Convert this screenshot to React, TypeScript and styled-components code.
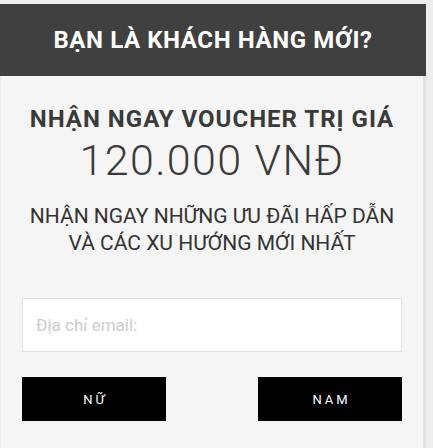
import React from "react";
import styled, { createGlobalStyle } from "styled-components";

const GlobalStyle = createGlobalStyle`
  html, body {
    margin: 0;
    padding: 0;
    background: #ededed;
    font-family: Roboto, "Liberation Sans", Arial, sans-serif;
  }
`;

const Panel = styled.div`
  margin-top: 4px;
  width: 426px;
  height: 444px;
  background: #f5f5f5;
  border-right: 3px solid #e2e2e2;
  border-left: 1px solid #ececec;
  box-sizing: border-box;
`;

const Header = styled.div`
  height: 72px;
  background: #404040;
  display: flex;
  align-items: center;
  justify-content: center;
  margin-right: -3px;
  margin-left: -1px;
`;

const HeaderTitle = styled.h1`
  margin: 0;
  color: #ffffff;
  font-size: 24px;
  font-weight: 700;
  letter-spacing: 0.6px;
`;

const Body = styled.div`
  display: flex;
  flex-direction: column;
  align-items: center;
  padding: 28px 21px 0;
`;

const Lead = styled.h2`
  margin: 0;
  color: #3a3a3a;
  font-size: 24px;
  font-weight: 700;
  letter-spacing: 1px;
  line-height: 30px;
`;

const Amount = styled.div`
  margin-top: 2px;
  color: #3a3a3a;
  font-size: 43px;
  font-weight: 300;
  letter-spacing: 1.4px;
  line-height: 48px;
`;

const Subline = styled.p`
  margin: 19px 0 0;
  color: #333333;
  font-size: 21px;
  font-weight: 400;
  line-height: 27px;
  text-align: center;
`;

const EmailInput = styled.input`
  margin-top: 41px;
  width: 100%;
  height: 54px;
  box-sizing: border-box;
  border: 1px solid #e3e3e3;
  background: #ffffff;
  padding: 0 13px;
  font-family: inherit;
  font-size: 17px;
  color: #333;
  outline: none;

  &::placeholder {
    color: #cccccc;
  }
`;

const ButtonRow = styled.div`
  margin-top: 25px;
  width: 100%;
  display: flex;
  justify-content: space-between;
`;

const GenderButton = styled.button`
  width: 144px;
  height: 44px;
  border: none;
  background: #000000;
  color: #ffffff;
  font-family: inherit;
  font-size: 13px;
  letter-spacing: 3px;
  padding: 0 0 0 3px;
  cursor: pointer;
`;

const App: React.FC = () => {
  return (
    <>
      <GlobalStyle />
      <Panel>
        <Header>
          <HeaderTitle>BẠN LÀ KHÁCH HÀNG MỚI?</HeaderTitle>
        </Header>
        <Body>
          <Lead>NHẬN NGAY VOUCHER TRỊ GIÁ</Lead>
          <Amount>120.000 VNĐ</Amount>
          <Subline>
            NHẬN NGAY NHỮNG ƯU ĐÃI HẤP DẪN
            <br />
            VÀ CÁC XU HƯỚNG MỚI NHẤT
          </Subline>
          <EmailInput type="email" placeholder="Địa chỉ email:" />
          <ButtonRow>
            <GenderButton>NỮ</GenderButton>
            <GenderButton>NAM</GenderButton>
          </ButtonRow>
        </Body>
      </Panel>
    </>
  );
};

export default App;
